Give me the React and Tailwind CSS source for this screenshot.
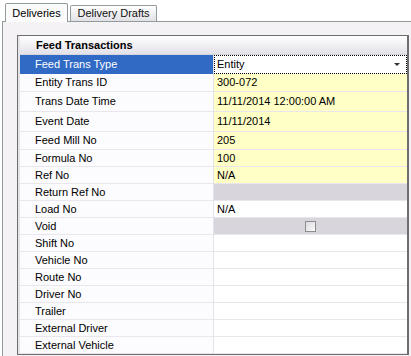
import React from 'react';

const rows = [
  { label: 'Feed Trans Type', value: 'Entity', h: 'h-[19px]', kind: 'select' },
  { label: 'Entity Trans ID', value: '300-072', h: 'h-[18px]', kind: 'yellow' },
  { label: 'Trans Date Time', value: '11/11/2014 12:00:00 AM', h: 'h-[20px]', kind: 'yellow' },
  { label: 'Event Date', value: '11/11/2014', h: 'h-[20px]', kind: 'yellow' },
  { label: 'Feed Mill No', value: '205', h: 'h-[18px]', kind: 'yellow' },
  { label: 'Formula No', value: '100', h: 'h-[17px]', kind: 'yellow' },
  { label: 'Ref No', value: 'N/A', h: 'h-[17px]', kind: 'yellow' },
  { label: 'Return Ref No', value: '', h: 'h-[17px]', kind: 'gray' },
  { label: 'Load No', value: 'N/A', h: 'h-[17px]', kind: 'white' },
  { label: 'Void', value: '', h: 'h-[17px]', kind: 'check' },
  { label: 'Shift No', value: '', h: 'h-[17px]', kind: 'white' },
  { label: 'Vehicle No', value: '', h: 'h-[17px]', kind: 'white' },
  { label: 'Route No', value: '', h: 'h-[17px]', kind: 'white' },
  { label: 'Driver No', value: '', h: 'h-[17px]', kind: 'white' },
  { label: 'Trailer', value: '', h: 'h-[17px]', kind: 'white' },
  { label: 'External Driver', value: '', h: 'h-[17px]', kind: 'white' },
  { label: 'External Vehicle', value: '', h: 'h-[17px]', kind: 'white' },
];

function ValueCell({ row }) {
  if (row.kind === 'select') {
    return (
      <div className="flex-1 h-full bg-white border border-dotted border-black flex items-center justify-between pl-[2px] pr-[6px]">
        <span>{row.value}</span>
        <span className="w-0 h-0 border-l-[3px] border-r-[3px] border-t-[3px] border-l-transparent border-r-transparent border-t-[#333]" />
      </div>
    );
  }
  if (row.kind === 'check') {
    return (
      <div className="flex-1 h-full bg-[#d8d6dc] flex items-center justify-center border-b border-[#e9e7ed]">
        <span className="w-[11px] h-[11px] border border-[#8c8c8c] bg-gradient-to-br from-[#dcdce0] to-[#fafafa]" />
      </div>
    );
  }
  const bg = row.kind === 'yellow' ? 'bg-[#ffffc6]' : row.kind === 'gray' ? 'bg-[#d8d6dc]' : 'bg-white';
  return (
    <div className={`flex-1 h-full ${bg} flex items-center pl-[3px] border-b border-[#e9e7ed]`}>
      {row.value}
    </div>
  );
}

export default function App() {
  return (
    <div className="w-[411px] h-[356px] bg-white overflow-hidden text-[11px] text-black font-['Liberation_Sans',Arial,sans-serif] leading-none">
      <div className="h-[21px] flex items-end pl-[5px] pt-[3px]">
        <div className="relative z-10 h-[19px] -mb-px w-[63px] border border-b-0 border-[#919b9c] rounded-t-[2px] bg-[#fbfbfb] flex items-center justify-center">
          Deliveries
        </div>
        <div className="h-[16px] ml-[2px] w-[87px] border border-b-0 border-[#919b9c] rounded-t-[2px] bg-gradient-to-b from-white to-[#e2e1e6] flex items-center justify-center text-[#111]">
          Delivery Drafts
        </div>
      </div>
      <div className="ml-[2px] h-[335px] border-l border-t border-[#919b9c] bg-[#f4f2f4] pl-[14px] pt-[13px] pr-[2px]">
        <div className="h-[320px] border border-r-2 border-[#6e6e6e] bg-white flex">
          <div className="w-[2px] bg-[#e6e4ea]" />
          <div className="flex-1 flex flex-col">
            <div className="h-[19px] flex items-center pl-[16px] font-bold bg-gradient-to-b from-white to-[#e3e1e9] border-b border-[#d6d4dc]">
              Feed Transactions
            </div>
            {rows.map((row) => (
              <div key={row.label} className={`${row.h} flex`}>
                <div
                  className={`w-[194px] h-full flex items-center pl-[15px] border-r border-[#e4e2e8] ${
                    row.kind === 'select' ? 'bg-[#316ac5] text-white' : 'bg-[#fcfbfd] border-b border-b-[#e9e7ed]'
                  }`}
                >
                  {row.label}
                </div>
                <ValueCell row={row} />
              </div>
            ))}
          </div>
        </div>
      </div>
    </div>
  );
}
